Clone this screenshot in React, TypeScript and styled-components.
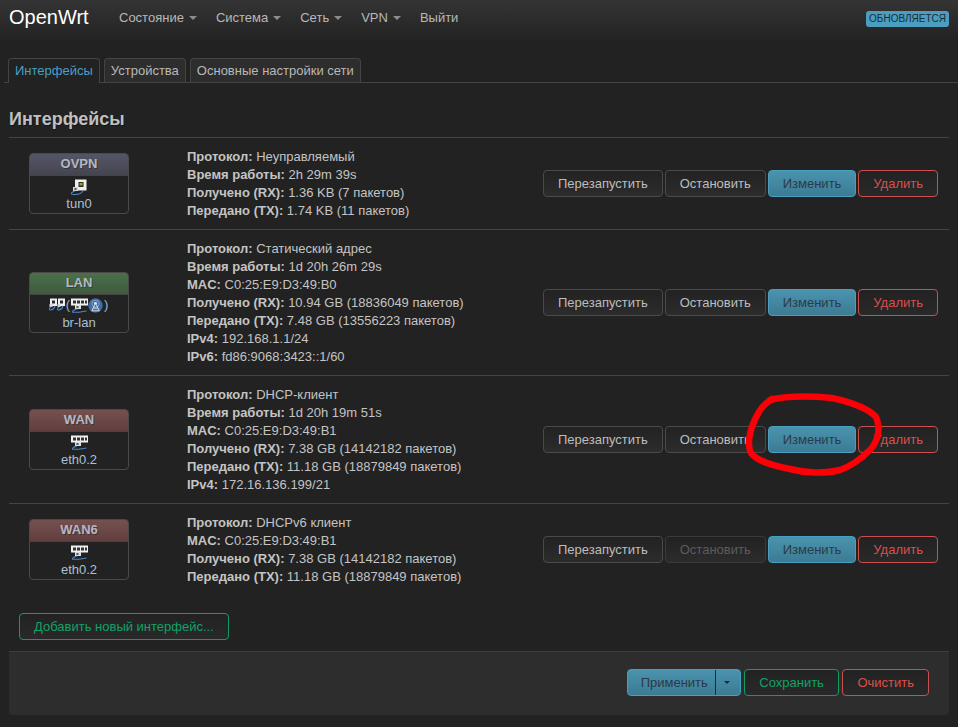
import React from "react";
import styled, { createGlobalStyle, css } from "styled-components";

const GlobalStyle = createGlobalStyle`
  html, body {
    margin: 0;
    padding: 0;
    background: #222;
  }
  body {
    font-family: "Liberation Sans", Arial, sans-serif;
    font-size: 13px;
    line-height: 18px;
    color: #c4c4c4;
  }
`;

type Field = { label: string; value: string };
type Iface = {
  name: string;
  tone: "vpn" | "lan" | "wan";
  device: string;
  icons: "tun" | "bridge" | "eth";
  fields: Field[];
  stopDisabled?: boolean;
};

const rx = (v: string) => ({ label: "Получено (RX):", value: v });
const tx = (v: string) => ({ label: "Передано (TX):", value: v });

const interfaces: Iface[] = [
  {
    name: "OVPN",
    tone: "vpn",
    device: "tun0",
    icons: "tun",
    fields: [
      { label: "Протокол:", value: "Неуправляемый" },
      { label: "Время работы:", value: "2h 29m 39s" },
      rx("1.36 KB (7 пакетов)"),
      tx("1.74 KB (11 пакетов)"),
    ],
  },
  {
    name: "LAN",
    tone: "lan",
    device: "br-lan",
    icons: "bridge",
    fields: [
      { label: "Протокол:", value: "Статический адрес" },
      { label: "Время работы:", value: "1d 20h 26m 29s" },
      { label: "MAC:", value: "C0:25:E9:D3:49:B0" },
      rx("10.94 GB (18836049 пакетов)"),
      tx("7.48 GB (13556223 пакетов)"),
      { label: "IPv4:", value: "192.168.1.1/24" },
      { label: "IPv6:", value: "fd86:9068:3423::1/60" },
    ],
  },
  {
    name: "WAN",
    tone: "wan",
    device: "eth0.2",
    icons: "eth",
    fields: [
      { label: "Протокол:", value: "DHCP-клиент" },
      { label: "Время работы:", value: "1d 20h 19m 51s" },
      { label: "MAC:", value: "C0:25:E9:D3:49:B1" },
      rx("7.38 GB (14142182 пакетов)"),
      tx("11.18 GB (18879849 пакетов)"),
      { label: "IPv4:", value: "172.16.136.199/21" },
    ],
  },
  {
    name: "WAN6",
    tone: "wan",
    device: "eth0.2",
    icons: "eth",
    stopDisabled: true,
    fields: [
      { label: "Протокол:", value: "DHCPv6 клиент" },
      { label: "MAC:", value: "C0:25:E9:D3:49:B1" },
      rx("7.38 GB (14142182 пакетов)"),
      tx("11.18 GB (18879849 пакетов)"),
    ],
  },
];

function PortIcon() {
  return (
    <svg width="16" height="16" viewBox="0 0 16 16">
      <rect x="4" y="0.5" width="11.5" height="11" fill="#efefef" />
      <rect x="7.5" y="3" width="5" height="5" fill="#2c2c1c" />
      <rect x="8.5" y="4" width="3" height="2.5" fill="#a89a30" />
      <rect x="2" y="8" width="5" height="4" fill="#d8d8d8" />
      <rect x="3.5" y="9" width="2" height="2" fill="#555" />
      <path d="M4 12 C1 13 -0.5 14.5 1 15.2 C5 15.8 10 15 12 12" fill="none" stroke="#4b86c8" strokeWidth="1.1" />
    </svg>
  );
}

function SmallPortIcon() {
  return (
    <svg width="8" height="13" viewBox="0 0 8 13">
      <rect x="1" y="0.5" width="7" height="7.5" fill="#efefef" />
      <rect x="3" y="2.5" width="3" height="3" fill="#2c2c2c" />
      <rect x="0.5" y="6" width="3" height="3" fill="#d8d8d8" />
      <path d="M2 9 C0 10 0 12.5 2 12 C4 11.5 5.5 10 6 8" fill="none" stroke="#4b86c8" strokeWidth="1.1" />
    </svg>
  );
}

function SwitchIcon() {
  return (
    <svg width="17" height="15" viewBox="0 0 17 15">
      <rect x="0" y="0.5" width="17" height="7" fill="#f0f0f0" />
      <path d="M2 2.5h3v3H2zM6 2.5h3v3H6zM10 2.5h3v3h-3zM14 2.5h2v3h-2z" fill="#333" />
      <rect x="4" y="7" width="6" height="4" fill="#dedede" />
      <rect x="5.5" y="8" width="2" height="2" fill="#555" />
      <path d="M6 11 C3 12 1 13 1.5 14.3 H8 L15.5 13" fill="none" stroke="#4b86c8" strokeWidth="1.1" />
    </svg>
  );
}

function WifiIcon() {
  return (
    <svg width="15" height="15" viewBox="0 0 17 17">
      <circle cx="8.5" cy="8.5" r="8.2" fill="#3f6ea6" />
      <circle cx="8.5" cy="6.5" r="4" fill="none" stroke="#7ea6d4" strokeWidth="1" />
      <circle cx="8.5" cy="6" r="1.5" fill="#e8e8e8" />
      <path d="M8.5 6 L4 15 M8.5 6 L13 15 M6 11.5 H11 M4.5 14.5 H12.5" fill="none" stroke="#e8e8e8" strokeWidth="1" />
    </svg>
  );
}

function DeviceIcons({ kind }: { kind: Iface["icons"] }) {
  if (kind === "tun") return <IconRow><PortIcon /></IconRow>;
  if (kind === "eth") return <IconRow><SwitchIcon /></IconRow>;
  return (
    <IconRow>
      <SmallPortIcon />
      <SmallPortIcon />
      <Paren>(</Paren>
      <SwitchIcon />
      <WifiIcon />
      <Paren>)</Paren>
    </IconRow>
  );
}

function RedCircle() {
  return (
    <CircleLayer width="958" height="727" viewBox="0 0 958 727">
      <path
        d="M770 400 C785 396 810 396 832 398 C850 402 868 408 876 417 C881 428 878 440 871 449 C862 458 852 466 840 470 C825 474 805 473 790 469 C775 466 758 462 751 453 C746 443 751 425 759 412 C762 406 766 403 772 399"
        fill="none"
        stroke="#fb0006"
        strokeWidth="6.5"
        strokeLinecap="round"
        strokeLinejoin="round"
      />
    </CircleLayer>
  );
}

export default function App() {
  return (
    <>
      <GlobalStyle />
      <Page>
        <Header>
          <Brand>OpenWrt</Brand>
          <Nav>
            <NavItem>Состояние<Caret /></NavItem>
            <NavItem>Система<Caret /></NavItem>
            <NavItem>Сеть<Caret /></NavItem>
            <NavItem>VPN<Caret /></NavItem>
            <NavItem>Выйти</NavItem>
          </Nav>
          <Status>ОБНОВЛЯЕТСЯ</Status>
        </Header>
        <Tabs>
          <Tab $active>Интерфейсы</Tab>
          <Tab>Устройства</Tab>
          <Tab>Основные настройки сети</Tab>
        </Tabs>
        <Main>
          <Title>Интерфейсы</Title>
          {interfaces.map((item) => (
            <Row key={item.name}>
              <BadgeCell>
                <Badge>
                  <BadgeHead $tone={item.tone}>{item.name}</BadgeHead>
                  <BadgeBody>
                    <DeviceIcons kind={item.icons} />
                    <DeviceName>{item.device}</DeviceName>
                  </BadgeBody>
                </Badge>
              </BadgeCell>
              <Info>
                {item.fields.map((f) => (
                  <InfoLine key={f.label}>
                    <strong>{f.label}</strong> {f.value}
                  </InfoLine>
                ))}
              </Info>
              <Actions>
                <Button>Перезапустить</Button>
                <Button $disabled={item.stopDisabled}>Остановить</Button>
                <Button $kind="primary">Изменить</Button>
                <Button $kind="danger">Удалить</Button>
              </Actions>
            </Row>
          ))}
          <AddWrap>
            <Button $kind="positive">Добавить новый интерфейс...</Button>
          </AddWrap>
          <Footer>
            <SplitButton>
              <SplitLabel>Применить</SplitLabel>
              <SplitCaret />
            </SplitButton>
            <Button $kind="positive">Сохранить</Button>
            <Button $kind="danger">Очистить</Button>
          </Footer>
        </Main>
        <RedCircle />
      </Page>
    </>
  );
}

const Page = styled.div`
  position: relative;
  min-height: 727px;
  overflow: hidden;
`;

const Header = styled.header`
  height: 42px;
  display: flex;
  align-items: center;
  padding: 0 9px;
  background: linear-gradient(#343434, #222);
`;

const Brand = styled.div`
  font-size: 20px;
  color: #fff;
  width: 100px;
  margin-top: -8px;
`;

const Nav = styled.nav`
  display: flex;
  gap: 19px;
  margin-top: -6px;
  flex: 1;
  padding-left: 10px;
`;

const NavItem = styled.div`
  color: #b8b8b8;
  display: flex;
  align-items: center;
`;

const Caret = styled.span`
  display: inline-block;
  margin-left: 5px;
  border-top: 4px solid #8c8c8c;
  border-left: 4px solid transparent;
  border-right: 4px solid transparent;
`;

const Status = styled.div`
  margin-top: -4px;
  height: 16px;
  line-height: 16px;
  padding: 0 3px;
  border-radius: 3px;
  background: #4a9ebf;
  color: #1d2b36;
  font-size: 10px;
`;

const Tabs = styled.div`
  display: flex;
  gap: 4px;
  margin: 16px 0 0 4px;
  padding-left: 4px;
  height: 24px;
  border-bottom: 1px solid #444;
`;

const Tab = styled.div<{ $active?: boolean }>`
  height: 24px;
  box-sizing: border-box;
  padding: 3px 6px 0;
  border: 1px solid #444;
  border-bottom: none;
  border-radius: 4px 4px 0 0;
  background: ${(p) => (p.$active ? "#222" : "#2d2d2d")};
  color: ${(p) => (p.$active ? "#4a9fc4" : "#b8b8b8")};
  ${(p) =>
    p.$active &&
    css`
      height: 25px;
      margin-bottom: -1px;
    `}
`;

const Main = styled.main`
  padding: 0 9px;
`;

const Title = styled.h2`
  margin: 0;
  padding-top: 25px;
  height: 29px;
  font-size: 18px;
  line-height: 22px;
  font-weight: bold;
  color: #c0c0c0;
  text-shadow: 1px 1px 0 rgba(0, 0, 0, 0.35);
`;

const Row = styled.section`
  display: grid;
  grid-template-columns: 140px 1fr auto;
  align-items: center;
  padding: 9px 11px 10px 0;
  border-top: 1px solid #444;
`;

const BadgeCell = styled.div`
  display: flex;
  justify-content: center;
`;

const Badge = styled.div`
  width: 100px;
  height: 61px;
  box-sizing: border-box;
  border: 1px solid #4a4a4a;
  border-radius: 4px;
  overflow: hidden;
  text-align: center;
`;

const toneColors = {
  vpn: "linear-gradient(#55556a, #45454f)",
  lan: "linear-gradient(#4c7049, #3f5a3e)",
  wan: "linear-gradient(#75504f, #613f3f)",
};

const BadgeHead = styled.div<{ $tone: Iface["tone"] }>`
  height: 21px;
  line-height: 20px;
  font-weight: bold;
  color: #b4b8c0;
  text-shadow: 1px 1px 0 rgba(0, 0, 0, 0.3);
  background: ${(p) => toneColors[p.$tone]};
  border-bottom: 1px solid #444;
`;

const BadgeBody = styled.div`
  padding-top: 3px;
`;

const IconRow = styled.div`
  height: 16px;
  display: flex;
  justify-content: center;
  align-items: flex-start;
`;

const Paren = styled.span`
  color: #9cb4d0;
  line-height: 14px;
  margin: 0 1px;
`;

const DeviceName = styled.div`
  margin-top: 1px;
  line-height: 16px;
  color: #a9c0d4;
`;

const Info = styled.div`
  padding-left: 38px;

  strong {
    font-weight: bold;
  }
`;

const InfoLine = styled.div`
  height: 18px;
  line-height: 20px;
`;

const Actions = styled.div`
  display: flex;
  gap: 2px;
`;

const kinds = {
  default: css`
    border-color: #4a4a4a;
    color: #bdbdbd;
    background: linear-gradient(#222, #2c2c2c);
  `,
  primary: css`
    border-color: #4a9ebf;
    color: #2b3a48;
    background: linear-gradient(#4a93ae, #3c7b93);
  `,
  danger: css`
    border-color: #c9504c;
    color: #d9504c;
    background: linear-gradient(#222, #292929);
  `,
  positive: css`
    border-color: #0f9d63;
    color: #10a266;
    background: linear-gradient(#222, #292929);
  `,
};

const Button = styled.button<{ $kind?: keyof typeof kinds; $disabled?: boolean }>`
  height: 27px;
  box-sizing: border-box;
  padding: 1px 14px 0;
  border: 1px solid;
  border-radius: 4px;
  font: inherit;
  ${(p) => kinds[p.$kind ?? "default"]}
  ${(p) =>
    p.$disabled &&
    css`
      color: #5c5c5c;
      border-color: #3a3a3a;
    `}
`;

const AddWrap = styled.div`
  padding: 18px 10px 11px;
`;

const Footer = styled.footer`
  height: 64px;
  box-sizing: border-box;
  display: flex;
  justify-content: flex-end;
  align-items: center;
  gap: 3.5px;
  padding: 0 20px 2px;
  background: #2d2d2d;
  border-top: 1px solid #3d3d3d;
  border-radius: 0 0 3px 3px;
`;

const SplitButton = styled.div`
  height: 27px;
  box-sizing: border-box;
  display: flex;
  border: 1px solid #4a9ebf;
  border-radius: 4px;
  background: linear-gradient(#4a93ae, #3c7b93);
  color: #2b3a48;
`;

const SplitLabel = styled.div`
  padding: 4px 7px 0 13px;
  border-right: 1px solid #1d2b36;
`;

const SplitCaret = styled.div`
  width: 24px;
  position: relative;

  &::after {
    content: "";
    position: absolute;
    left: 8px;
    top: 11px;
    border-top: 3px solid #1d2b36;
    border-left: 3px solid transparent;
    border-right: 3px solid transparent;
  }
`;

const CircleLayer = styled.svg`
  position: absolute;
  top: 0;
  left: 0;
  pointer-events: none;
`;
